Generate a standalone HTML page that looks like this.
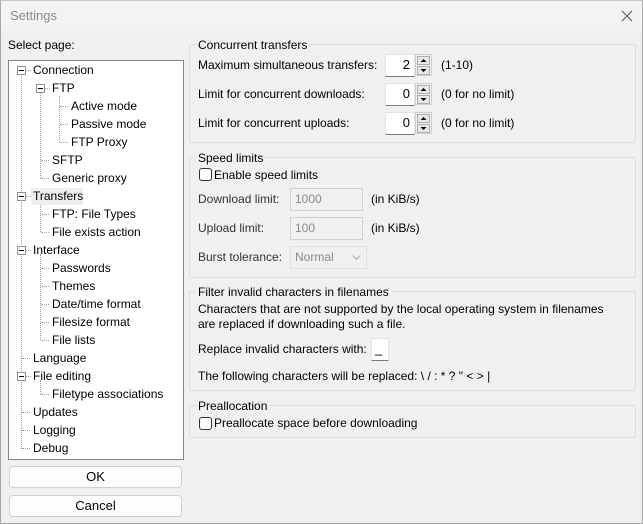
<!DOCTYPE html>
<html><head><meta charset="utf-8"><style>
*{margin:0;padding:0;box-sizing:border-box}
body{width:643px;height:524px;background:#f0f0f0;font-family:"Liberation Sans",sans-serif;font-size:12px;color:#000;position:relative;overflow:hidden}
.a{position:absolute;white-space:nowrap}
.t{position:absolute;white-space:nowrap;line-height:14px}
.g{position:absolute;border:1px solid #dcdcdc;border-radius:2px}
.gl{position:absolute;background:#f0f0f0;padding:0 2px;line-height:14px}
.hl{position:absolute;border-top:1px dotted #a0a0a0;width:8px}
.vl{position:absolute;border-left:1px dotted #a0a0a0}
.ex{position:absolute;width:9px;height:9px;border:1px solid #919191;background:#fff}
.ex:after{content:"";position:absolute;left:1px;top:3px;width:5px;height:1px;background:#000}
.in{position:absolute;background:#fff;border:1px solid #e3e3e3;border-bottom:1px solid #7a7a7a;text-align:right;padding-right:4px;line-height:20px;font-size:13px}
.dis{position:absolute;background:#f0f0f0;border:1px solid #d0d0d0;color:#8a8a8a;padding-left:4px;line-height:20px}
.sp{position:absolute;width:17px;height:22px;border:1px solid #cfcfcf;background:#f0f0f0}
.sp svg{position:absolute;left:1px;top:1px}
.cb{position:absolute;width:13px;height:13px;border:1px solid #333;border-radius:3px;background:#fff}
.btn{position:absolute;left:9px;width:173px;height:22px;border:1px solid #d0d0d0;border-radius:4px;background:#fdfdfd;text-align:center;line-height:20px;font-size:13px}
</style></head><body>
<div class="a" style="left:0;top:0;width:643px;height:31px;background:#f3f3f3"></div>
<div class="a" style="left:0;top:0;width:643px;height:524px;border:1px solid #a8a8a8;border-top-color:#c8c8c8"></div>
<div class="t" style="left:10px;top:9px;color:#8a8a8a;font-size:13px">Settings</div>
<svg class="a" style="left:621px;top:10px" width="12" height="12"><path d="M1 1L11 11M11 1L1 11" stroke="#555" stroke-width="1"/></svg>

<div class="t" style="left:8px;top:38px">Select page:</div>
<div class="a" style="left:8px;top:60px;width:176px;height:400px;background:#fff;border:1px solid #828790"></div>
<div class="vl" style="left:21px;top:74px;height:375px"></div>
<div class="vl" style="left:40px;top:92px;height:86px"></div>
<div class="vl" style="left:59px;top:96px;height:46px"></div>
<div class="vl" style="left:40px;top:200px;height:32px"></div>
<div class="vl" style="left:40px;top:254px;height:86px"></div>
<div class="vl" style="left:40px;top:380px;height:14px"></div>

<div class="hl" style="left:26px;top:70px;width:5px"></div><div class="ex" style="left:17px;top:66px"></div><div class="t" style="left:33px;top:63px">Connection</div>
<div class="hl" style="left:45px;top:88px;width:5px"></div><div class="ex" style="left:36px;top:84px"></div><div class="t" style="left:52px;top:81px">FTP</div>
<div class="hl" style="left:60px;top:106px"></div><div class="t" style="left:71px;top:99px">Active mode</div>
<div class="hl" style="left:60px;top:124px"></div><div class="t" style="left:71px;top:117px">Passive mode</div>
<div class="hl" style="left:60px;top:142px"></div><div class="t" style="left:71px;top:135px">FTP Proxy</div>
<div class="hl" style="left:41px;top:160px"></div><div class="t" style="left:52px;top:153px">SFTP</div>
<div class="hl" style="left:41px;top:178px"></div><div class="t" style="left:52px;top:171px">Generic proxy</div>
<div class="a" style="left:31px;top:188px;width:52px;height:17px;background:#eeeeee"></div>
<div class="hl" style="left:26px;top:196px;width:5px"></div><div class="ex" style="left:17px;top:192px"></div><div class="t" style="left:33px;top:189px">Transfers</div>
<div class="hl" style="left:41px;top:214px"></div><div class="t" style="left:52px;top:207px">FTP: File Types</div>
<div class="hl" style="left:41px;top:232px"></div><div class="t" style="left:52px;top:225px">File exists action</div>
<div class="hl" style="left:26px;top:250px;width:5px"></div><div class="ex" style="left:17px;top:246px"></div><div class="t" style="left:33px;top:243px">Interface</div>
<div class="hl" style="left:41px;top:268px"></div><div class="t" style="left:52px;top:261px">Passwords</div>
<div class="hl" style="left:41px;top:286px"></div><div class="t" style="left:52px;top:279px">Themes</div>
<div class="hl" style="left:41px;top:304px"></div><div class="t" style="left:52px;top:297px">Date/time format</div>
<div class="hl" style="left:41px;top:322px"></div><div class="t" style="left:52px;top:315px">Filesize format</div>
<div class="hl" style="left:41px;top:340px"></div><div class="t" style="left:52px;top:333px">File lists</div>
<div class="hl" style="left:22px;top:358px"></div><div class="t" style="left:33px;top:351px">Language</div>
<div class="hl" style="left:26px;top:376px;width:5px"></div><div class="ex" style="left:17px;top:372px"></div><div class="t" style="left:33px;top:369px">File editing</div>
<div class="hl" style="left:41px;top:394px"></div><div class="t" style="left:52px;top:387px">Filetype associations</div>
<div class="hl" style="left:22px;top:412px"></div><div class="t" style="left:33px;top:405px">Updates</div>
<div class="hl" style="left:22px;top:430px"></div><div class="t" style="left:33px;top:423px">Logging</div>
<div class="hl" style="left:22px;top:448px"></div><div class="t" style="left:33px;top:441px">Debug</div>

<div class="btn" style="top:466px">OK</div>
<div class="btn" style="top:495px">Cancel</div>

<!-- Concurrent -->
<div class="g" style="left:189px;top:44px;width:447px;height:99px"></div>
<div class="gl" style="left:196px;top:38px">Concurrent transfers</div>
<div class="t" style="left:198px;top:58px">Maximum simultaneous transfers:</div>
<div class="in" style="left:385px;top:54px;width:30px;height:23px">2</div>
<div class="sp" style="left:415px;top:54px"><svg width="13" height="19"><rect x="0.5" y="0.5" width="12" height="8" fill="#e8e8e8" stroke="#adadad"/><rect x="0.5" y="10.5" width="12" height="8" fill="#e8e8e8" stroke="#adadad"/><path d="M3.5 6L6.5 3L9.5 6Z M3.5 13L6.5 16L9.5 13Z" fill="#000"/></svg></div>
<div class="t" style="left:441px;top:58px">(1-10)</div>
<div class="t" style="left:198px;top:87px">Limit for concurrent downloads:</div>
<div class="in" style="left:385px;top:83px;width:30px;height:23px">0</div>
<div class="sp" style="left:415px;top:83px"><svg width="13" height="19"><rect x="0.5" y="0.5" width="12" height="8" fill="#e8e8e8" stroke="#adadad"/><rect x="0.5" y="10.5" width="12" height="8" fill="#e8e8e8" stroke="#adadad"/><path d="M3.5 6L6.5 3L9.5 6Z M3.5 13L6.5 16L9.5 13Z" fill="#000"/></svg></div>
<div class="t" style="left:441px;top:87px">(0 for no limit)</div>
<div class="t" style="left:198px;top:116px">Limit for concurrent uploads:</div>
<div class="in" style="left:385px;top:112px;width:30px;height:23px">0</div>
<div class="sp" style="left:415px;top:112px"><svg width="13" height="19"><rect x="0.5" y="0.5" width="12" height="8" fill="#e8e8e8" stroke="#adadad"/><rect x="0.5" y="10.5" width="12" height="8" fill="#e8e8e8" stroke="#adadad"/><path d="M3.5 6L6.5 3L9.5 6Z M3.5 13L6.5 16L9.5 13Z" fill="#000"/></svg></div>
<div class="t" style="left:441px;top:116px">(0 for no limit)</div>

<!-- Speed -->
<div class="g" style="left:189px;top:157px;width:447px;height:121px"></div>
<div class="gl" style="left:196px;top:151px">Speed limits</div>
<div class="cb" style="left:199px;top:168px"></div>
<div class="t" style="left:214px;top:168px">Enable speed limits</div>
<div class="t" style="left:198px;top:192px;color:#333">Download limit:</div>
<div class="dis" style="left:290px;top:188px;width:73px;height:23px">1000</div>
<div class="t" style="left:371px;top:192px">(in KiB/s)</div>
<div class="t" style="left:198px;top:221px;color:#333">Upload limit:</div>
<div class="dis" style="left:290px;top:217px;width:73px;height:23px">100</div>
<div class="t" style="left:371px;top:221px">(in KiB/s)</div>
<div class="t" style="left:198px;top:250px;color:#333">Burst tolerance:</div>
<div class="dis" style="left:290px;top:246px;width:77px;height:23px;border-color:#e0e0e0">Normal<svg style="position:absolute;left:61px;top:8px" width="9" height="6"><path d="M0.5 0.5L4.5 4.5L8.5 0.5" stroke="#aaa" fill="none"/></svg></div>

<!-- Filter -->
<div class="g" style="left:189px;top:291px;width:447px;height:100px"></div>
<div class="gl" style="left:196px;top:285px">Filter invalid characters in filenames</div>
<div class="t" style="left:198px;top:302px">Characters that are not supported by the local operating system in filenames</div>
<div class="t" style="left:198px;top:317px">are replaced if downloading such a file.</div>
<div class="t" style="left:198px;top:342px">Replace invalid characters with:</div>
<div class="in" style="left:371px;top:338px;width:18px;height:23px;text-align:left;padding-left:3px">_</div>
<div class="t" style="left:198px;top:369px">The following characters will be replaced: \ / : * ? " &lt; &gt; |</div>

<!-- Prealloc -->
<div class="g" style="left:189px;top:405px;width:447px;height:33px"></div>
<div class="gl" style="left:196px;top:399px">Preallocation</div>
<div class="cb" style="left:199px;top:417px"></div>
<div class="t" style="left:214px;top:416px">Preallocate space before downloading</div>
</body></html>
